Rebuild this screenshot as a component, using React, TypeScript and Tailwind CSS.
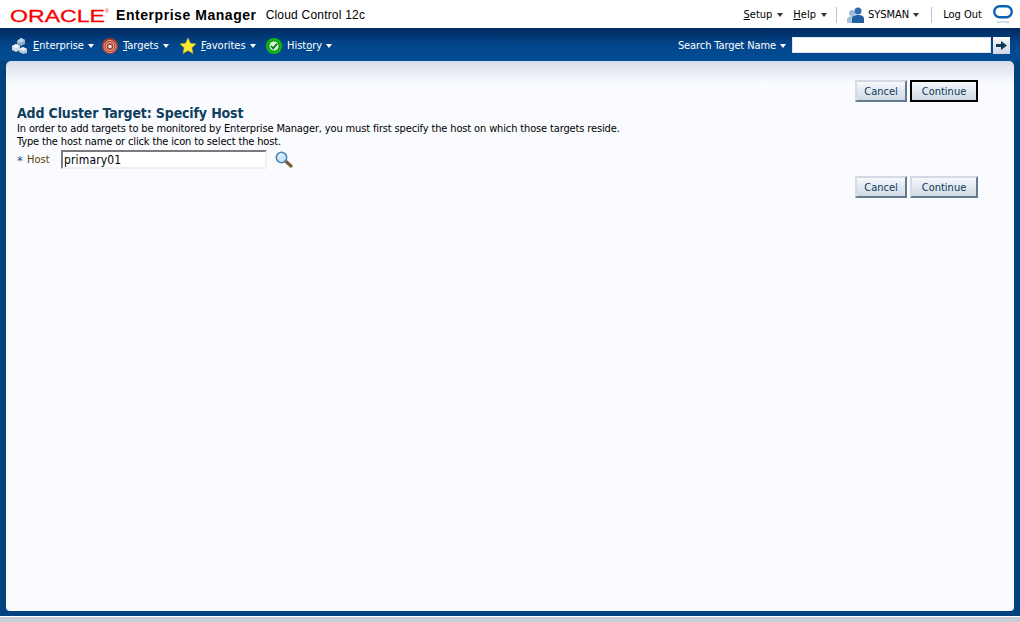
import React from 'react';

const tahoma = '[font-family:"DejaVu_Sans_Condensed","DejaVu_Sans",sans-serif]';

const Caret = ({ className = 'border-t-white' }: { className?: string }) => (
  <span className={`inline-block w-0 h-0 border-x-[3.5px] border-x-transparent border-t-[4px] ${className}`} />
);

const CubesIcon = () => (
  <svg width="16" height="16" viewBox="0 0 16 16">
    <path d="M5 3l4-3 4 2v4l-4 2-4-2z" fill="#8fa9c8" />
    <path d="M5 3l4 2 4-3-4-2z" fill="#c4d3e4" />
    <path d="M0 8l4-2 4 2v4l-4 2-4-2z" fill="#cfdbe8" />
    <path d="M0 8l4 2 4-2-4-2z" fill="#f5f8fb" />
    <path d="M7 11l4-2 4 2v4l-4 1-4-2z" fill="#b4c6da" />
    <path d="M7 11l4 2 4-2-4-2z" fill="#eef3f8" />
  </svg>
);

const TargetsIcon = () => (
  <svg width="16" height="16" viewBox="0 0 16 16" fill="none">
    <circle cx="8" cy="8" r="8" fill="#a83a28" />
    <circle cx="8" cy="8.500" r="6" stroke="#eeb5a4" strokeWidth="0.900" />
    <circle cx="8" cy="8.500" r="4" stroke="#f4cfc3" strokeWidth="0.900" />
    <circle cx="8" cy="8.500" r="1.800" fill="#fbe8e0" />
  </svg>
);

const StarIcon = () => (
  <svg width="16" height="16" viewBox="0 0 16 16">
    <path d="M8 0l2.400 5.300 5.600.6-4.200 3.800 1.200 5.800L8 12.600l-5 2.900 1.200-5.800L0 5.900l5.600-.6z" fill="#fbe92f" stroke="#dcbc12" strokeWidth="0.500" />
  </svg>
);

const HistoryIcon = () => (
  <svg width="16" height="16" viewBox="0 0 16 16" fill="none">
    <circle cx="8" cy="8" r="8" fill="#0cbb0c" />
    <circle cx="8" cy="8" r="5.200" fill="#d8f4d8" stroke="#067a06" strokeWidth="1" />
    <path d="M5 8l2.200 2.300L11.300 5.500" stroke="#067a06" strokeWidth="1.800" />
  </svg>
);

const UserIcon = () => (
  <svg width="17" height="16" viewBox="0 0 17 16">
    <circle cx="5" cy="6" r="3" fill="#9cb8d6" />
    <path d="M0 16v-3c0-2.500 2-4 5-4s5 1.500 5 4v3z" fill="#a9c2dc" />
    <circle cx="11" cy="4" r="3.500" fill="#2c6cad" />
    <path d="M5 16v-4.500C5 9 7.500 8 11 8s6 1 6 3.500V16z" fill="#23609f" />
  </svg>
);

const OracleO = () => (
  <svg width="20" height="20" viewBox="0 0 20 20" fill="none">
    <rect x="1.200" y="1.200" width="17.600" height="11" rx="5.500" stroke="#0a62b4" strokeWidth="2.400" />
    <path d="M4 17.500c3-1 9-1 12 0" stroke="#b9cfe6" strokeWidth="1.500" />
  </svg>
);

const SearchIcon = () => (
  <svg width="18" height="17" viewBox="0 0 18 17" fill="none">
    <path d="M10.500 10l5.500 5" stroke="#7a5a3a" strokeWidth="3.200" strokeLinecap="round" />
    <circle cx="6.500" cy="6.500" r="5.200" fill="#cfe4f6" stroke="#4d86b8" strokeWidth="1.600" />
    <path d="M3.500 6c.3-1.500 1.300-2.500 3-2.700" stroke="#ffffff" strokeWidth="1.200" />
  </svg>
);

const NavItem = ({ icon, label, w }: { icon: React.ReactNode; label: React.ReactNode; w: string }) => (
  <div className={`flex items-center ${w}`}>
    {icon}
    <span className="ml-[5px] pt-[2px] text-white text-[11px]">{label}</span>
    <span className="ml-[4px] flex"><Caret /></span>
  </div>
);

const Button = ({ label, focused, w }: { label: string; focused?: boolean; w: string }) => (
  <button
    className={`h-[22px] ${w} pt-[2px] text-[11px] text-[#0f3a5a] bg-gradient-to-b from-[#f6f8fb] to-[#cfd9e6] border-2 ${
      focused ? 'border-black' : 'border-t-[#d4dae4] border-l-[#d4dae4] border-r-[#66788e] border-b-[#66788e]'
    }`}
  >
    {label}
  </button>
);

const Buttons = ({ focused }: { focused?: boolean }) => (
  <div className="flex justify-end gap-[3px]">
    <Button label="Cancel" w="w-[52px]" />
    <Button label="Continue" w="w-[68px]" focused={focused} />
  </div>
);

export default function App() {
  return (
    <div className={`h-[622px] w-[1020px] overflow-hidden flex flex-col bg-[#00437f] ${tahoma}`}>
      <header className="h-7 bg-white flex items-center shrink-0 pl-[10px] pr-[7px] pt-[2px] text-[11px] text-black">
        <svg width="100" height="20" viewBox="0 0 100 20" className="shrink-0 -mt-[2px] overflow-visible">
          <text x="0" y="18" textLength="95" lengthAdjust="spacingAndGlyphs" fill="#f80000" stroke="#f80000" strokeWidth="0.300" fontSize="17" style={{ fontFamily: '"Liberation Sans", sans-serif' }}>ORACLE</text>
          <text x="95" y="9" fill="#f80000" fontSize="5" style={{ fontFamily: '"Liberation Sans", sans-serif' }}>®</text>
        </svg>
        <span className="ml-[6px] text-[14px] font-bold tracking-[0.55px] [font-family:'Liberation_Sans',sans-serif]">Enterprise Manager</span>
        <span className="ml-[9px] text-[12px] tracking-[0.2px] [font-family:'Liberation_Sans',sans-serif]">Cloud Control 12c</span>
        <div className="ml-auto flex items-center">
          <span><u>S</u>etup</span>
          <span className="ml-[5px] flex"><Caret className="border-t-[#333]" /></span>
          <span className="ml-[10px]"><u>H</u>elp</span>
          <span className="ml-[5px] flex"><Caret className="border-t-[#333]" /></span>
          <span className="ml-[9px] w-px h-4 bg-[#b8c4d0]" />
          <span className="ml-[10px] flex"><UserIcon /></span>
          <span className="ml-[4px]">SYSMAN</span>
          <span className="ml-[4px] flex"><Caret className="border-t-[#333]" /></span>
          <span className="ml-[12px] w-px h-4 bg-[#b8c4d0]" />
          <span className="ml-[11px]">Log Out</span>
          <span className="ml-[11px] flex"><OracleO /></span>
        </div>
      </header>

      <nav className="h-[33px] shrink-0 flex items-center pl-[12px] pr-[10px] pt-[1px] bg-gradient-to-b from-[#012a5e] via-[#03468c] to-[#014c94]">
        <div className="flex items-center mt-[1px]">
          <NavItem w="w-[90px]" icon={<CubesIcon />} label={<><u>E</u>nterprise</>} />
          <NavItem w="w-[78px]" icon={<TargetsIcon />} label={<><u>T</u>argets</>} />
          <NavItem w="w-[86px]" icon={<StarIcon />} label={<><u>F</u>avorites</>} />
          <NavItem w="w-[70px]" icon={<HistoryIcon />} label={<>Hist<u>o</u>ry</>} />
        </div>
        <div className="ml-auto flex items-center">
          <span className="text-white text-[11px] tracking-[-0.1px] pt-[2px]">Search Target Name</span>
          <span className="ml-[4px] flex mt-[1px]"><Caret /></span>
          <input className="ml-[6px] w-[199px] h-[16px] bg-white border border-[#dfe5ec] outline-none" />
          <span className="ml-[2px] w-[17px] h-[17px] bg-gradient-to-b from-[#f7f9fb] to-[#cfd9e5] flex items-center justify-center">
            <svg width="11" height="9" viewBox="0 0 11 9">
              <path d="M0 3h5V0l6 4.500L5 9V6H0z" fill="#0f3a5a" />
            </svg>
          </span>
        </div>
      </nav>

      <div className="flex-1 px-[6px] min-h-0">
        <main className="h-[550px] rounded-t-[5px] rounded-b-[4px] bg-[#f9fbfe] bg-gradient-to-b from-[#d8deea] via-[#f9fbfe] via-[4%] to-[#f9fbfe] pt-[19px] pl-[11px] pr-[36px]">
          <Buttons focused />
          <h1 className="mt-[2px] text-[14px] leading-[18px] tracking-[-0.15px] font-bold text-[#0f3f5f]">Add Cluster Target: Specify Host</h1>
          <p className="text-[11px] leading-[13px] tracking-[-0.14px] text-black">
            In order to add targets to be monitored by Enterprise Manager, you must first specify the host on which those targets reside.
            <br />
            Type the host name or click the icon to select the host.
          </p>
          <div className="mt-[2px] flex items-center h-[19px]">
            <div className="w-[44px] flex items-center text-[11px] pt-[2px]">
              <span className="w-[10px] text-[13px] leading-[13px] text-[#1d5a8a]">*</span>
              <span className="text-[#5c4200]">Host</span>
            </div>
            <input
              readOnly
              value="primary01"
              className="w-[206px] h-[19px] bg-white border-2 border-t-[#7a7a7a] border-l-[#7a7a7a] border-r-[#eef0f4] border-b-[#eef0f4] px-px text-[12px] tracking-[0.15px] text-black outline-none"
            />
            <span className="ml-[8px] flex"><SearchIcon /></span>
          </div>
          <div className="mt-[7px]"><Buttons /></div>
        </main>
      </div>

      <div className="h-[5px] shrink-0 bg-[#00437f]" />
      <div className="h-px shrink-0 bg-white" />
      <div className="h-[5px] shrink-0 bg-[#c6cdd9]" />
    </div>
  );
}
